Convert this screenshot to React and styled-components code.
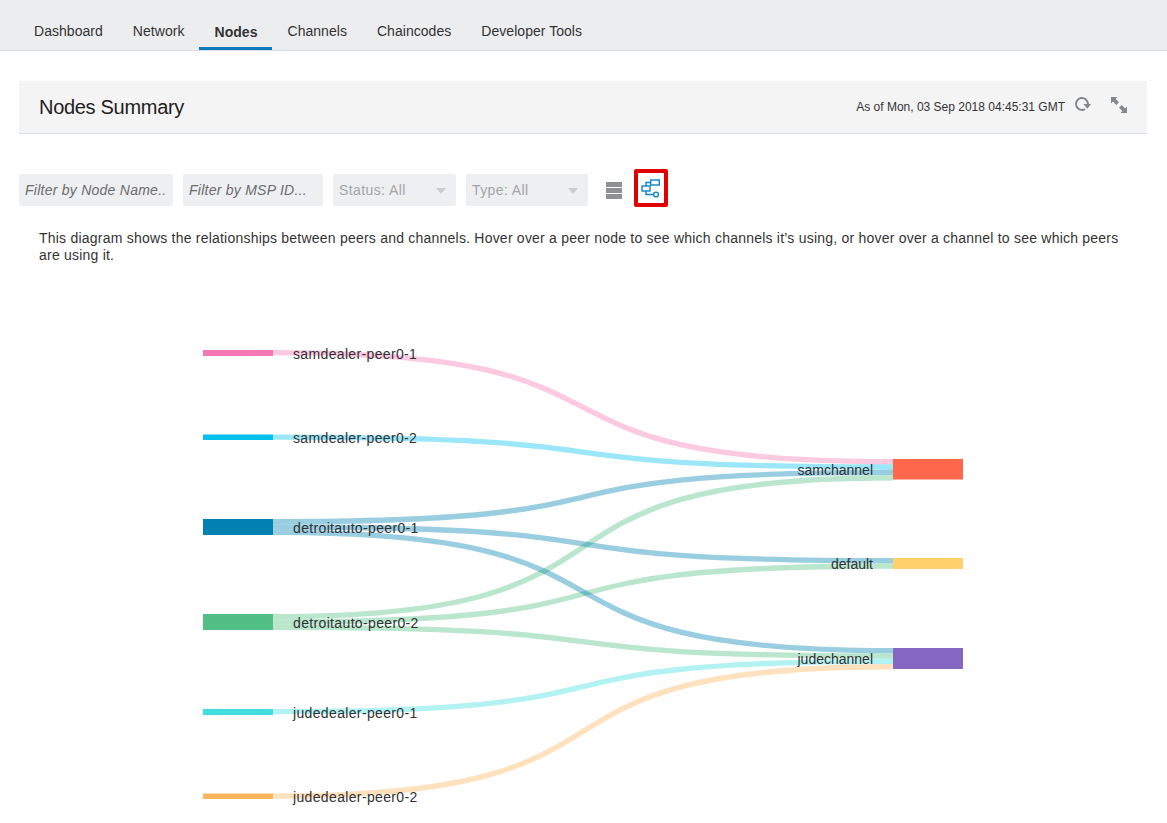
import React from 'react';
import styled, { createGlobalStyle } from 'styled-components';

const GlobalStyle = createGlobalStyle`
  html, body {
    margin: 0;
    height: 100%;
    overflow: hidden;
    background: #fff;
    font-family: "Liberation Sans", Arial, sans-serif;
    color: #2c2d2e;
  }
`;

const NavBar = styled.nav`
  display: flex;
  align-items: flex-start;
  height: 50px;
  padding-left: 19px;
  background: #ecedef;
  border-bottom: 1px solid #d6dfe5;
`;

const Tab = styled.a`
  box-sizing: border-box;
  height: 50px;
  padding: ${(p) => (p.$active ? '24px' : '23px')} 15px 0;
  font-size: 14px;
  line-height: 16px;
  letter-spacing: 0.04px;
  font-weight: ${(p) => (p.$active ? 700 : 400)};
  color: #333;
  border-bottom: 3px solid ${(p) => (p.$active ? '#0b7bbd' : 'transparent')};
`;

const Main = styled.main`
  padding: 30px 20px 0 19px;
`;

const Summary = styled.header`
  display: flex;
  align-items: center;
  height: 52px;
  padding: 0 19px 0 20px;
  background: #f4f4f5;
  border-bottom: 1px solid #d6dfe5;
`;

const Title = styled.h1`
  flex: 1;
  margin: 0;
  font-size: 20px;
  font-weight: 400;
  letter-spacing: -0.3px;
  color: #1f2021;
`;

const AsOf = styled.span`
  font-size: 12px;
  color: #333;
`;

const SummaryIcon = styled.svg`
  display: block;
  width: 18px;
  height: 18px;
  margin-left: ${(p) => p.$gap}px;
  margin-top: -4px;
  color: #85888b;
`;

const FilterRow = styled.div`
  display: flex;
  align-items: flex-start;
  gap: 10px;
  margin-top: 35px;
`;

const FilterInput = styled.input`
  box-sizing: border-box;
  width: ${(p) => p.$w}px;
  height: 32px;
  margin-top: 5px;
  padding: 0 6px;
  border: 0;
  border-radius: 2px;
  background: #eeeff1;
  font: italic 14px "Liberation Sans", Arial, sans-serif;
  letter-spacing: 0.25px;
  &::placeholder {
    color: #6b6c6e;
    opacity: 1;
  }
`;

const FilterSelect = styled.div`
  display: flex;
  align-items: center;
  justify-content: space-between;
  box-sizing: border-box;
  width: ${(p) => p.$w}px;
  height: 32px;
  margin-top: 5px;
  padding: 0 10px 0 6px;
  border-radius: 2px;
  background: #eeeff1;
  font-size: 14px;
  letter-spacing: 0.4px;
  color: #a3a5a8;
`;

const Caret = styled.i`
  width: 0;
  height: 0;
  border-left: 5px solid transparent;
  border-right: 5px solid transparent;
  border-top: 6px solid #cbcdcf;
  margin-top: 2px;
`;

const ListIcon = styled.div`
  display: flex;
  flex-direction: column;
  gap: 1px;
  width: 16px;
  margin: 13px 2px 0 8px;
  & > span {
    height: 5px;
    background: #8e9194;
  }
`;

const DiagramButton = styled.button`
  display: flex;
  align-items: center;
  justify-content: center;
  box-sizing: border-box;
  width: 34px;
  height: 38px;
  padding: 0;
  border: 4px solid #e00000;
  border-radius: 2px;
  background: #fff;
`;

const Description = styled.p`
  margin: 23px 0 0;
  padding: 0 20px 0 20px;
  font-size: 14px;
  line-height: 17px;
  letter-spacing: 0.22px;
  color: #333;
`;

const Chart = styled.svg`
  display: block;
  width: 1128px;
  height: 523px;
  margin-top: 36px;
`;

const Label = styled.text`
  font-size: 14px;
  letter-spacing: ${(p) => p.$spacing || 0}px;
  fill: #2f3133;
`;

const LEFT_X = 203;
const RIGHT_X = 893;
const NODE_W = 70;
const LINK_W = 5.35;
const CURVE = 410; // how far the control points sit from each end of a link

const peers = [
  { name: 'samdealer-peer0-1', y: 350, h: 6, color: '#f478b2' },
  { name: 'samdealer-peer0-2', y: 434.5, h: 5.5, color: '#04c2f0' },
  { name: 'detroitauto-peer0-1', y: 519, h: 16, color: '#0081b2' },
  { name: 'detroitauto-peer0-2', y: 614, h: 16, color: '#52c085' },
  { name: 'judedealer-peer0-1', y: 709, h: 6, color: '#42dede' },
  { name: 'judedealer-peer0-2', y: 793.5, h: 5.5, color: '#ffb45c' },
];

const channels = [
  { name: 'samchannel', y: 459, h: 20.5, color: '#ff674d' },
  { name: 'default', y: 558, h: 11, color: '#ffd06b' },
  { name: 'judechannel', y: 648, h: 21, color: '#8566c0' },
];

// [peer index, slot in the peer, channel index, slot in the channel]
const links = [
  [0, 0, 0, 0],
  [1, 0, 0, 1],
  [2, 0, 0, 2],
  [3, 0, 0, 3],
  [2, 1, 1, 0],
  [3, 1, 1, 1],
  [2, 2, 2, 0],
  [3, 2, 2, 1],
  [4, 0, 2, 2],
  [5, 0, 2, 3],
];

const linkPath = ([p, ps, c, cs]) => {
  const x0 = LEFT_X + NODE_W;
  const x1 = RIGHT_X;
  const y0 = peers[p].y + LINK_W * ps + LINK_W / 2;
  const y1 = channels[c].y + LINK_W * cs + LINK_W / 2;
  return `M${x0} ${y0}C${x0 + CURVE} ${y0} ${x1 - CURVE} ${y1} ${x1} ${y1}`;
};

const tabs = ['Dashboard', 'Network', 'Nodes', 'Channels', 'Chaincodes', 'Developer Tools'];

export default function App() {
  return (
    <>
      <GlobalStyle />
      <NavBar>
        {tabs.map((t) => (
          <Tab key={t} $active={t === 'Nodes'}>{t}</Tab>
        ))}
      </NavBar>
      <Main>
        <Summary>
          <Title>Nodes Summary</Title>
          <AsOf>As of Mon, 03 Sep 2018 04:45:31 GMT</AsOf>
          <SummaryIcon $gap={9} viewBox="0 0 18 18" fill="none">
            <path d="M11 13.2A6 6 0 1 1 14 8" stroke="currentColor" strokeWidth="2" />
            <path d="M9.5 8H17l-3.7 4.8z" fill="currentColor" />
          </SummaryIcon>
          <SummaryIcon $gap={18} viewBox="0 0 18 18" fill="none">
            <path d="M1 1h6.5L5.6 2.9 9 6.3 6.3 9 2.9 5.6 1 7.5z" fill="currentColor" />
            <path d="M17 17h-6.5l1.9-1.9L9 11.7 11.7 9l3.4 3.4L17 10.5z" fill="currentColor" />
          </SummaryIcon>
        </Summary>

        <FilterRow>
          <FilterInput $w={154} placeholder="Filter by Node Name.." />
          <FilterInput $w={140} placeholder="Filter by MSP ID..." />
          <FilterSelect $w={123}>Status: All<Caret /></FilterSelect>
          <FilterSelect $w={122}>Type: All<Caret /></FilterSelect>
          <ListIcon><span /><span /><span /></ListIcon>
          <DiagramButton>
            <svg width="20" height="19" viewBox="0 0 20 19" fill="none" stroke="#0a84cc" strokeWidth="1.4">
              <rect x="9.7" y="1" width="8.6" height="5" />
              <rect x="1" y="7" width="8" height="5" />
              <path d="M5 7V3.5H9.7M5 12v3.5H12.5" />
              <circle cx="15" cy="15.5" r="2.4" />
            </svg>
          </DiagramButton>
        </FilterRow>

        <Description>
          This diagram shows the relationships between peers and channels. Hover over a peer node to see which
          channels it’s using, or hover over a channel to see which peers are using it.
        </Description>

        <Chart viewBox="19 300 1128 523">
          {links.map((l) => (
            <path
              key={l.join('-')}
              d={linkPath(l)}
              fill="none"
              stroke={peers[l[0]].color}
              strokeOpacity="0.4"
              strokeWidth={LINK_W}
            />
          ))}
          {peers.map((n) => (
            <g key={n.name}>
              <rect x={LEFT_X} y={n.y} width={NODE_W} height={n.h} fill={n.color} />
              <Label $spacing={0.35} x={LEFT_X + NODE_W + 20} y={n.y + n.h / 2 + 5.5}>{n.name}</Label>
            </g>
          ))}
          {channels.map((n) => (
            <g key={n.name}>
              <rect x={RIGHT_X} y={n.y} width={NODE_W} height={n.h} fill={n.color} />
              <Label x={RIGHT_X - 20} y={n.y + n.h / 2 + 5.5} textAnchor="end">{n.name}</Label>
            </g>
          ))}
        </Chart>
      </Main>
    </>
  );
}
